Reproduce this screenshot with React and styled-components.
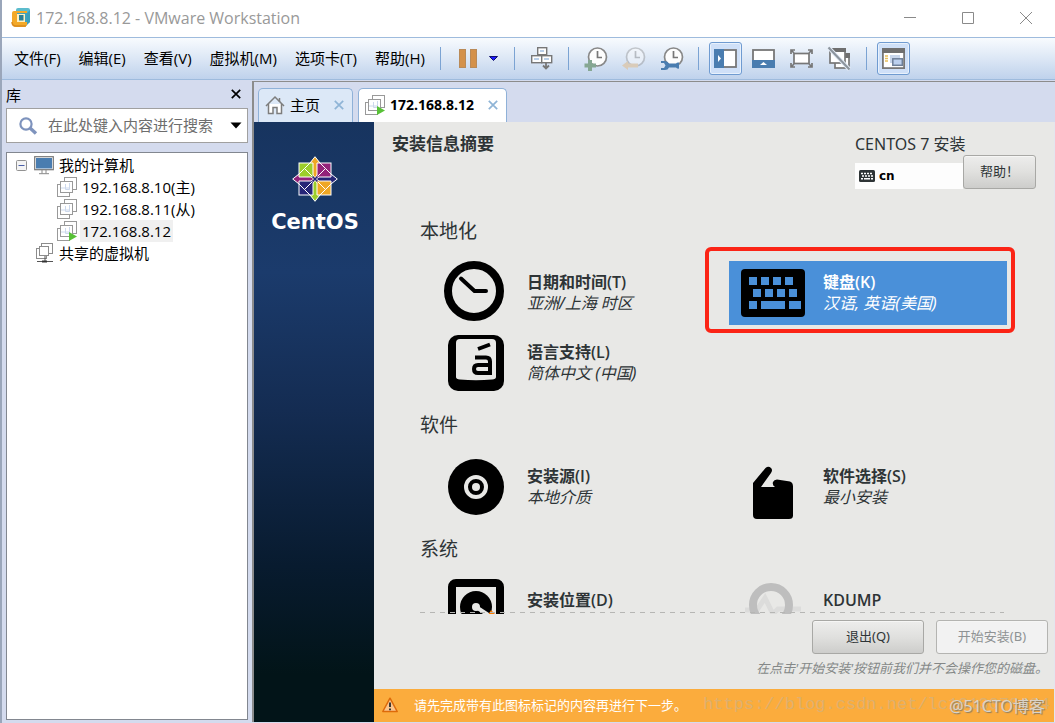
import React from 'react'
import styled, { createGlobalStyle, css } from 'styled-components'

const GlobalStyle = createGlobalStyle`
  * {
    box-sizing: border-box;
  }
  body {
    margin: 0;
    font-family: "Noto Sans", "Noto Sans CJK SC", sans-serif;
    background: #fff;
  }
  button {
    font: inherit;
    color: inherit;
    background: none;
    border: 0;
    padding: 0;
    margin: 0;
  }
  ul {
    list-style: none;
    margin: 0;
    padding: 0;
  }
  svg {
    display: block;
    flex: none;
    overflow: visible;
  }
`

/* ---------- icons ---------- */

const VmwareLogo = () => (
  <svg width="20" height="20" viewBox="0 0 20 20">
    <rect x="4" y="0" width="14" height="15" rx="2" fill="#5cbccd" />
    <path d="M18 2v12l-4 4H5V5h10z" fill="#3a9fbd" />
    <path d="M2 3q-2 0-2 2v10q0 4 4 4h9l2-2V3z" fill="#f3a928" />
    <path d="M0 14q0 4 4 4h10" fill="none" stroke="#d98a1c" strokeWidth="1.5" />
    <path d="M5 5h10v9h-3V8H5z" fill="#3fa3bf" />
    <rect x="5" y="6" width="8" height="8" fill="#fff0c0" />
    <rect x="7" y="7" width="4.500" height="5.500" fill="#2d7f95" />
  </svg>
)

const Pause = () => (
  <svg width="18" height="20" viewBox="0 0 18 20" fill="#d4914a" stroke="#b98a58">
    <rect x="0.5" y="0.5" width="6" height="18" />
    <rect x="11.5" y="0.5" width="6" height="18" />
  </svg>
)

const BlueArrow = () => (
  <svg width="10" height="6" viewBox="0 0 10 6">
    <path d="M0.5 0.5h8L4.500 4.500z" fill="#1c1cff" stroke="#10106a" />
  </svg>
)

const SendKeys = () => (
  <svg width="22" height="23" viewBox="0 0 22 23" stroke="#777" fill="#fdfdfd" strokeWidth="1.4">
    <rect x="6.7" y="0.7" width="9" height="7" />
    <rect x="0.7" y="8.7" width="10" height="7" />
    <rect x="10.7" y="8.7" width="10" height="7" />
    <path d="M9 4h4M3 12h5M13 12h5" stroke="#b9cfe9" strokeWidth="2" />
    <path d="M15 15v6M12 18.5l3 3 3-3" fill="none" strokeWidth="1.8" />
  </svg>
)

const Clock = ({ kind }) => (
  <svg width="24" height="24" viewBox="0 0 24 24">
    <g opacity={kind === 'revert' ? 0.4 : 1}>
      <circle cx="13.5" cy="10" r="9" fill="#fdfdfd" stroke="#888" strokeWidth="1.7" />
      <path d="M13.5 4v6.5H18" fill="none" stroke="#777" strokeWidth="1.7" />
    </g>
    {kind === 'take' && <path d="M4 13h4v3.500h4v4H8V24H4v-3.500H0.500v-4H4z" fill="#86a793" />}
    {kind === 'revert' && <path d="M0 18.500l6-4.500v2.500h10v4H6V23z" fill="#d9cbb9" />}
    {kind === 'manage' && (
      <path d="M1 14h4q3 0 4 2.500h7q1-1.500 3-1v6q-2 .5-3-1H9Q8 23 5 23H1v-2h3l1.500-2.500L4 16H1z" fill="#4a7db0" />
    )}
  </svg>
)

const LibraryPane = () => (
  <svg width="23" height="19" viewBox="0 0 23 19">
    <rect x="1" y="1" width="21" height="17" fill="#fff" stroke="#777" strokeWidth="1.8" />
    <rect width="10" height="19" fill="#4a7db0" />
    <path d="M4 6l3 3.500-3 3.500z" fill="#fff" />
  </svg>
)

const ThumbnailPane = () => (
  <svg width="23" height="19" viewBox="0 0 23 19">
    <rect x="1" y="1" width="21" height="17" fill="#fff" stroke="#777" strokeWidth="1.8" />
    <rect y="11" width="23" height="8" fill="#4a7db0" />
    <path d="M8 16l3.500-3 3.500 3z" fill="#fff" />
  </svg>
)

const FullScreen = () => (
  <svg width="23" height="19" viewBox="0 0 23 19" fill="none" stroke="#777" strokeWidth="1.7">
    <rect x="4" y="4.500" width="15" height="10" fill="#fff" />
    <path d="M1 5V1h4M18 1h4v4M22 14v4h-4M5 18H1v-4M1 1l3 3M22 1l-3 3M22 18l-3-3M1 18l3-3" />
  </svg>
)

const Unity = () => (
  <svg width="23" height="23" viewBox="0 0 23 23">
    <rect x="7" y="7" width="14" height="14" fill="#fff" stroke="#777" strokeWidth="1.7" />
    <rect x="6" y="6" width="16" height="5" fill="#6f6f6f" />
    <rect x="2" y="2" width="15" height="14" fill="#fff" stroke="#777" strokeWidth="1.7" />
    <rect x="1" y="1" width="17" height="4" fill="#6f6f6f" />
    <path d="M0.500 0.500l21 22" stroke="#e5edf8" strokeWidth="4" />
    <path d="M0.500 0.500l21 22" stroke="#8d959e" strokeWidth="2.200" />
  </svg>
)

const ConsoleView = () => (
  <svg width="23" height="21" viewBox="0 0 23 21">
    <rect x="0.900" y="0.900" width="21.200" height="19.200" fill="#fff" stroke="#777" strokeWidth="1.800" />
    <rect width="23" height="5" fill="#6f6f6f" />
    <path d="M3 8h3M3 10.500h3M3 13h3" stroke="#e8bf5a" strokeWidth="1.300" />
    <rect x="8" y="7" width="10" height="8" fill="#c8d6ec" />
    <rect x="10.800" y="10.800" width="9.500" height="6.500" fill="#bcd0ee" stroke="#6d7f98" strokeWidth="1.500" />
  </svg>
)

const WindowGlyph = ({ d }) => (
  <svg width="14" height="14" viewBox="0 0 14 14" fill="none" stroke="#8a8a8a">
    <path d={d} />
  </svg>
)

const Cross = ({ size = 10, color = '#000' }) => (
  <svg width={size} height={size} viewBox="0 0 10 10">
    <path d="M0.800 0.800l8.400 8.400M9.200 0.800L0.800 9.200" stroke={color} strokeWidth="1.700" />
  </svg>
)

const Magnifier = () => (
  <svg width="19" height="18" viewBox="0 0 19 18" fill="none" stroke="#7e93bd">
    <circle cx="7" cy="7" r="5.600" strokeWidth="2.200" />
    <path d="M11 11l6 5.500" strokeWidth="3.400" />
  </svg>
)

const Caret = () => (
  <svg width="12" height="7" viewBox="0 0 12 7">
    <path d="M0.500 0.500h11L6 6.500z" fill="#000" />
  </svg>
)

const Collapse = () => (
  <svg width="11" height="11" viewBox="0 0 11 11">
    <rect x="0.500" y="0.500" width="10" height="10" rx="1" fill="#f4f4f4" stroke="#929292" />
    <path d="M2.500 5.500h6" stroke="#4a5fa8" />
  </svg>
)

const Monitor = () => (
  <svg width="20" height="20" viewBox="0 0 20 20">
    <rect x="0.700" y="1.700" width="18.600" height="13" fill="#fff" stroke="#777" strokeWidth="1.200" />
    <rect x="2" y="3" width="16" height="10.500" fill="#4a7db0" />
    <path d="M8 15v3.500M12 15v3.500M5 18.700h10" stroke="#888" />
  </svg>
)

const VmIcon = ({ running }) => (
  <svg width="20" height="20" viewBox="0 0 20 20">
    <g fill="#fff" stroke="#999">
      <rect x="7.500" y="0.500" width="12" height="12" />
      <rect x="0.500" y="7.500" width="12" height="12" />
      <rect x="3.500" y="4.500" width="12" height="11" />
    </g>
    <path d="M4 11h9M8.500 7v5.500h4V6" fill="none" stroke="#ccd8ec" />
    {running && <path d="M12 11l8 4.500-8 4.500z" fill="#58c137" />}
  </svg>
)

const SharedIcon = () => (
  <svg width="18" height="20" viewBox="0 0 18 20">
    <g fill="#fff" stroke="#8c8c8c">
      <rect x="5.500" y="0.500" width="11" height="10" />
      <rect x="0.500" y="5.500" width="10" height="10" />
      <rect x="3.500" y="3.500" width="9" height="9" />
    </g>
    <path d="M9 13v5M1 18.500h16" stroke="#555" />
    <path d="M6 18.500h5" stroke="#333" strokeWidth="2" />
  </svg>
)

const House = () => (
  <svg width="20" height="20" viewBox="0 0 20 20" fill="#fff" stroke="#7d7d7d" strokeWidth="1.500">
    <path d="M3.500 9v9.500h4.500v-6h4v6h4.500V9" />
    <path d="M1 11L10 2l9 9" fill="none" />
    <path d="M14.500 3v4" />
  </svg>
)

const CentosMark = () => (
  <svg width="46" height="46" viewBox="0 0 46 46" stroke="#fff" strokeWidth="1">
    <rect x="7" y="7" width="15" height="15" fill="#9ccd2a" />
    <rect x="24" y="7" width="15" height="15" fill="#932279" />
    <rect x="24" y="24" width="15" height="15" fill="#efa724" />
    <rect x="7" y="24" width="15" height="15" fill="#262577" />
    <path d="M23 2l10.500 10.500L23 23 12.500 12.500z" fill="#9ccd2a" />
    <path d="M23 2l10.500 10.500L23 23z" fill="#932279" />
    <path d="M44 23L33.500 33.500 23 23l10.500-10.500z" fill="#932279" />
    <path d="M44 23L33.500 33.500 23 23z" fill="#efa724" />
    <path d="M23 44L12.500 33.500 23 23l10.500 10.500z" fill="#efa724" />
    <path d="M23 44L12.500 33.500 23 23z" fill="#262577" />
    <path d="M2 23l10.500-10.500L23 23 12.500 33.500z" fill="#262577" />
    <path d="M2 23l10.500-10.500L23 23z" fill="#9ccd2a" />
    <path d="M23 0.700l5 6.300h-3v12l-2 3-2-3V7h-3z" fill="#efa724" />
    <path d="M45.300 23L39 28v-3H27l-3-2 3-2h12v-3z" fill="#262577" />
    <path d="M23 45.300L18 39h3V27l2-3 2 3v12h3z" fill="#9ccd2a" />
    <path d="M0.700 23L7 18v3h12l3 2-3 2H7v3z" fill="#932279" />
    <path d="M20.500 20.500l5 5M25.500 20.500l-5 5" stroke="#262577" strokeWidth="1.500" />
  </svg>
)

const SmallKeyboard = () => (
  <svg width="16" height="12" viewBox="0 0 16 12">
    <rect width="16" height="12" rx="1.500" fill="#2e3436" />
    <path d="M2 3.500h2M5 3.500h2M8 3.500h2M11 3.500h2M3 6h2M6 6h2M9 6h2M12 6h2M2 8.800h2M5 8.800h6M12 8.800h2" stroke="#fff" strokeWidth="1.500" />
  </svg>
)

const DateTime = () => (
  <svg width="64" height="64" viewBox="0 0 64 64" fill="none" stroke="#000">
    <circle cx="29" cy="30" r="26" strokeWidth="8" />
    <path d="M16 17.500L29.500 30H41" strokeWidth="4" strokeLinecap="round" strokeLinejoin="round" />
  </svg>
)

const KeyboardIcon = () => (
  <svg width="64" height="64" viewBox="0 0 64 64">
    <rect y="8" width="64" height="48" rx="4" fill="#000" />
    <g fill="#4a90d9">
      {[8, 20, 32, 44].map((x) => <rect key={x} x={x} y="16" width="8" height="8" />)}
      {[12, 24, 36, 48].map((x) => <rect key={x} x={x} y="28" width="8" height="8" />)}
      <rect x="8" y="40" width="8" height="8" />
      <rect x="20" y="40" width="24" height="8" />
      <rect x="48" y="40" width="12" height="8" />
    </g>
  </svg>
)

const Language = () => (
  <svg width="64" height="64" viewBox="0 0 64 64">
    <rect x="3" y="4" width="56" height="56" rx="10" fill="#000" />
    <path d="M15 8h32q4 0 4 4v34q0 2-4 2.500-16 1.500-32 0-4-.5-4-2.500V12q0-4 4-4z" fill="#e8e8e6" />
    <path d="M30 26.500h11q4 0 4 4V42H33q-4 0-4-4t4-4h12" fill="none" stroke="#000" strokeWidth="4" />
    <path d="M33 18l12-4.500" stroke="#000" strokeWidth="4" />
  </svg>
)

const Disc = () => (
  <svg width="64" height="64" viewBox="0 0 64 64">
    <circle cx="31" cy="32" r="28" fill="#000" />
    <circle cx="31" cy="32" r="10" fill="none" stroke="#e8e8e6" strokeWidth="4" />
    <circle cx="31" cy="32" r="4" fill="#e8e8e6" />
  </svg>
)

const Package = () => (
  <svg width="64" height="64" viewBox="0 0 64 64">
    <path d="M12 28L24.500 13q3-2.500 5.500 0 2 2 0 5L20 32h14q-3-2-2-5 1-2.500 4-2.500l13 2q3 1 3 5v29q0 3.500-4 3.500H16q-4 0-4-4z" fill="#000" />
  </svg>
)

const HardDrive = () => (
  <svg width="64" height="64" viewBox="0 0 64 64">
    <rect x="7" y="4" width="48" height="60" rx="4" fill="none" stroke="#000" strokeWidth="8" />
    <circle cx="31" cy="28" r="16" fill="#000" />
    <circle cx="31" cy="28" r="4" fill="#e8e8e6" />
    <path d="M31 28l17 11" stroke="#e8e8e6" strokeWidth="4" />
    <path d="M43 36l3-5 6 6z" fill="#f57900" />
  </svg>
)

const Kdump = () => (
  <svg width="64" height="64" viewBox="0 0 64 64" fill="none">
    <path d="M4 31h12l8-12 8 16 5-5h23" stroke="#dcdcdb" strokeWidth="5" />
    <circle cx="30" cy="26" r="18" stroke="#bebebe" strokeWidth="8" />
  </svg>
)

const Warning = () => (
  <svg width="16" height="16" viewBox="0 0 16 16">
    <path d="M8 1.200L15.200 14.500H0.800z" fill="#fbc58c" stroke="#dd6a09" strokeWidth="1.500" strokeLinejoin="round" />
    <path d="M8 5.500v4.500M8 11.500v1.700" stroke="#333" strokeWidth="1.900" />
  </svg>
)

/* ---------- page ---------- */

const menus = ['文件(F)', '编辑(E)', '查看(V)', '虚拟机(M)', '选项卡(T)', '帮助(H)']

const sections = [
  {
    title: '本地化',
    items: [
      { name: '日期和时间(T)', status: '亚洲/上海 时区', icon: <DateTime /> },
      { name: '键盘(K)', status: '汉语, 英语(美国)', icon: <KeyboardIcon />, selected: true },
      { name: '语言支持(L)', status: '简体中文 (中国)', icon: <Language /> },
    ],
  },
  {
    title: '软件',
    items: [
      { name: '安装源(I)', status: '本地介质', icon: <Disc /> },
      { name: '软件选择(S)', status: '最小安装', icon: <Package /> },
    ],
  },
  {
    title: '系统',
    items: [
      { name: '安装位置(D)', icon: <HardDrive /> },
      { name: 'KDUMP', icon: <Kdump /> },
    ],
  },
]

export default function App() {
  return (
    <>
      <GlobalStyle />
      <Window>
        <TitleBar>
          <VmwareLogo />
          <WindowTitle>172.168.8.12 - VMware Workstation</WindowTitle>
          <WindowButton aria-label="最小化"><WindowGlyph d="M1 6.5h12" /></WindowButton>
          <WindowButton aria-label="最大化"><WindowGlyph d="M1.500 1.500h11v11h-11z" /></WindowButton>
          <WindowButton aria-label="关闭"><WindowGlyph d="M1 1l12 12M13 1L1 13" /></WindowButton>
        </TitleBar>
        <MenuBar>
          <Menus>
            {menus.map((menu) => <MenuButton key={menu}>{menu}</MenuButton>)}
          </Menus>
          <Separator />
          <Tool aria-label="挂起"><Pause /></Tool>
          <Tool $narrow aria-label="电源选项"><BlueArrow /></Tool>
          <Separator />
          <Tool aria-label="发送 Ctrl+Alt+Del"><SendKeys /></Tool>
          <Separator />
          <ToolGroup>
            <Tool aria-label="拍摄快照"><Clock kind="take" /></Tool>
            <Tool aria-label="恢复快照"><Clock kind="revert" /></Tool>
            <Tool aria-label="管理快照"><Clock kind="manage" /></Tool>
          </ToolGroup>
          <Separator />
          <ToolGroup>
            <Tool $pressed aria-label="显示库"><LibraryPane /></Tool>
            <Tool aria-label="显示缩略图"><ThumbnailPane /></Tool>
            <Tool aria-label="全屏"><FullScreen /></Tool>
            <Tool aria-label="Unity"><Unity /></Tool>
          </ToolGroup>
          <Separator />
          <Tool $pressed aria-label="控制台视图"><ConsoleView /></Tool>
        </MenuBar>

        <Body>
          <Library>
            <LibraryHead>
              库
              <button aria-label="关闭库"><Cross /></button>
            </LibraryHead>
            <Search>
              <Magnifier />
              <SearchInput aria-label="搜索" placeholder="在此处键入内容进行搜索" />
              <Caret />
            </Search>
            <Tree>
              <TreeRow $indent="9px"><Collapse /><TreeIcon><Monitor /></TreeIcon><TreeLabel>我的计算机</TreeLabel></TreeRow>
              <TreeRow $indent="50px"><VmIcon /><TreeLabel>192.168.8.10(主)</TreeLabel></TreeRow>
              <TreeRow $indent="50px"><VmIcon /><TreeLabel>192.168.8.11(从)</TreeLabel></TreeRow>
              <TreeRow $indent="50px"><VmIcon running /><TreeLabel $selected>172.168.8.12</TreeLabel></TreeRow>
              <TreeRow $indent="29px"><SharedIcon /><TreeLabel>共享的虚拟机</TreeLabel></TreeRow>
            </Tree>
          </Library>

          <Workspace>
            <Tabs>
              <Tab><House /><TabName>主页</TabName><Cross color="#8fb4d6" /></Tab>
              <Tab $active><VmIcon running /><TabName>172.168.8.12</TabName><Cross color="#8fb4d6" /></Tab>
            </Tabs>
            <Guest>
              <Brand>
                <CentosMark />
                <BrandName>CentOS</BrandName>
              </Brand>
              <Installer>
                <Header>
                  <Title>安装信息摘要</Title>
                  <div>
                    <Product>CENTOS 7 安装</Product>
                    <HeaderRow>
                      <Layout><SmallKeyboard />cn</Layout>
                      <HelpButton>帮助！</HelpButton>
                    </HeaderRow>
                  </div>
                </Header>
                <Hub>
                  {sections.map((section) => (
                    <section key={section.title}>
                      <SectionTitle>{section.title}</SectionTitle>
                      <Spokes>
                        {section.items.map((item) => (
                          <Spoke key={item.name} $selected={item.selected}>
                            {item.icon}
                            <span>
                              <SpokeName>{item.name}</SpokeName>
                              {item.status && <SpokeStatus>{item.status}</SpokeStatus>}
                            </span>
                            {item.selected && <Highlight />}
                          </Spoke>
                        ))}
                      </Spokes>
                    </section>
                  ))}
                  <ScrollEdge />
                </Hub>
                <Footer>
                  <Actions>
                    <ActionButton>退出(Q)</ActionButton>
                    <ActionButton disabled>开始安装(B)</ActionButton>
                  </Actions>
                  <Hint>在点击'开始安装'按钮前我们并不会操作您的磁盘。</Hint>
                </Footer>
                <WarningBar>
                  <Warning />
                  <span>请先完成带有此图标标记的内容再进行下一步。</span>
                  <BlogUrl>https://blog.csdn.net/lc1013078424</BlogUrl>
                  <Stamp>@51CTO博客</Stamp>
                </WarningBar>
              </Installer>
            </Guest>
          </Workspace>
        </Body>
      </Window>
    </>
  )
}

const Window = styled.div`
  height: 100vh;
  display: flex;
  flex-direction: column;
  border-left: 2px solid #9aa6ba;
  overflow: hidden;
`

const TitleBar = styled.header`
  height: 37px;
  flex: none;
  display: flex;
  align-items: center;
  padding: 0 0 1px 10px;
  background: #fff;
`

const WindowTitle = styled.span`
  flex: 1;
  margin-left: 4px;
  font-family: "Open Sans", sans-serif;
  font-size: 16px;
  color: #999;
`

const WindowButton = styled.button`
  width: 58px;
  height: 36px;
  display: flex;
  align-items: center;
  justify-content: center;
`

const MenuBar = styled.nav`
  height: 43px;
  flex: none;
  display: flex;
  align-items: center;
  border-top: 1px solid #9ebbdd;
  border-bottom: 1px solid #9ebbdd;
  background: linear-gradient(#f8fbfe, #dfe9f6 45%, #bfd2ec);
`

const Menus = styled.div`
  display: flex;
  gap: 18px;
  width: 438px;
  padding-left: 12px;
`

const MenuButton = styled.button`
  padding-bottom: 2px;
  font-family: "Open Sans", "Noto Sans CJK SC", sans-serif;
  font-size: 15px;
  color: #000;
  white-space: nowrap;
`

const Separator = styled.div`
  width: 1px;
  height: 23px;
  margin-right: 10px;
  background: #7ba3d3;
  * + & {
    margin-left: 10px;
  }
  ${Menus} + & {
    margin-left: 0;
  }
`

const ToolGroup = styled.div`
  display: flex;
  gap: 5px;
`

const Tool = styled.button`
  width: ${(p) => (p.$narrow ? '20px' : '33px')};
  height: 33px;
  display: flex;
  align-items: center;
  justify-content: center;
  border-radius: 3px;
  ${(p) => p.$pressed && css`
    border: 1px solid #6f9bd1;
    background: #cfe0f8;
    box-shadow: inset 0 0 0 1px #e8f1fc;
  `}
`

const Body = styled.div`
  flex: 1;
  min-height: 0;
  display: flex;
  padding-bottom: 1px;
  background: #d4dbee;
`

const Library = styled.aside`
  width: 250px;
  flex: none;
  display: flex;
  flex-direction: column;
  padding: 0 4px 2px;
  font-family: "Open Sans", "Noto Sans CJK SC", sans-serif;
  font-size: 15px;
  color: #000;
`

const LibraryHead = styled.div`
  height: 28px;
  display: flex;
  align-items: center;
  justify-content: space-between;
  padding-right: 7px;
`

const Search = styled.div`
  height: 35px;
  display: flex;
  align-items: center;
  padding: 0 5px 0 12px;
  margin-bottom: 9px;
  border: 1px solid #a0a0a0;
  background: #fff;
`

const SearchInput = styled.input`
  flex: 1;
  min-width: 0;
  border: 0;
  padding: 0 0 2px;
  margin-left: 10px;
  font: inherit;
  outline: none;
  background: none;
  &::placeholder {
    color: #6d6d6d;
  }
`

const Tree = styled.ul`
  flex: 1;
  padding-top: 1px;
  border: 1px solid #828790;
  background: #fff;
`

const TreeRow = styled.li`
  height: 22px;
  display: flex;
  align-items: center;
  padding-left: ${(p) => p.$indent};
`

const TreeIcon = styled.span`
  margin-left: 7px;
`

const TreeLabel = styled.span`
  line-height: 22px;
  margin-left: 3px;
  padding: 0 2px;
  background: ${(p) => (p.$selected ? '#f0f0f0' : 'none')};
`

const Workspace = styled.main`
  flex: 1;
  min-width: 0;
  display: flex;
  flex-direction: column;
  margin-top: 1px;
  border-top: 1px solid #8c8c8c;
  border-left: 2px solid #8c8c8c;
`

const Tabs = styled.div`
  height: 40px;
  flex: none;
  display: flex;
  align-items: flex-end;
  gap: 5px;
  padding-left: 4px;
`

const Tab = styled.button`
  height: 34px;
  display: flex;
  align-items: center;
  padding: 0 8px 2px 6px;
  border: 1px solid #8fb1d8;
  border-bottom: 0;
  border-radius: 5px 5px 0 0;
  font-family: "Open Sans", "Noto Sans CJK SC", sans-serif;
  font-size: ${(p) => (p.$active ? '14px' : '15px')};
  font-weight: ${(p) => (p.$active ? 700 : 400)};
  color: #000;
  background: ${(p) => (p.$active ? '#fff' : '#dce8f7')};
`

const TabName = styled.span`
  margin: 0 14px 0 5px;
`

const Guest = styled.div`
  flex: 1;
  min-height: 0;
  display: flex;
  border-right: 1px solid #e3e6ee;
`

const Brand = styled.div`
  width: 120px;
  flex: none;
  display: flex;
  flex-direction: column;
  align-items: center;
  padding: 34px 0 0 2px;
  background: linear-gradient(#17345f, #1b3b6c 25%, #142c52 48%, #081b2f 74%, #021418 92%);
`

const BrandName = styled.div`
  margin-top: 5px;
  line-height: 30px;
  font-family: "DejaVu Sans", sans-serif;
  font-size: 21px;
  font-weight: 700;
  color: #fff;
`

const Installer = styled.div`
  flex: 1;
  min-width: 0;
  display: flex;
  flex-direction: column;
  color: #2e3436;
  background: #e8e8e6;
`

const Header = styled.div`
  display: flex;
  justify-content: space-between;
  padding: 12px 18px 0;
`

const Title = styled.h1`
  margin: 0;
  font-size: 17px;
  line-height: 20px;
  font-weight: 700;
`

const Product = styled.div`
  font-size: 16px;
  line-height: 21px;
`

const HeaderRow = styled.div`
  display: flex;
  align-items: flex-end;
`

const Layout = styled.div`
  width: 108px;
  height: 26px;
  display: flex;
  align-items: center;
  gap: 4px;
  padding-left: 4px;
  font-family: "DejaVu Sans", sans-serif;
  font-size: 12px;
  font-weight: 700;
  color: #000;
  background: #fdfdfd;
`

const ActionButton = styled.button`
  width: 112px;
  height: 34px;
  padding-bottom: 3px;
  border: 1px solid #a8a8a5;
  border-radius: 3px;
  font-size: 13px;
  color: #2e3436;
  background: linear-gradient(#ededec, #e0e0de 50%, #cdcdcb);
  box-shadow: inset 0 1px 0 #f6f6f5;
  &:disabled {
    color: #8f9394;
    border-color: #b4b4b1;
    background: #f2f2f2;
  }
`

const HelpButton = styled(ActionButton)`
  width: 73px;
`

const Hub = styled.div`
  flex: 1;
  min-height: 0;
  overflow: hidden;
  position: relative;
  padding: 30px 47px 0 46px;
`

const SectionTitle = styled.h2`
  margin: 0 0 18px;
  font-size: 19px;
  line-height: 24px;
  font-weight: 400;
`

const Spokes = styled.div`
  display: grid;
  grid-template-columns: 1fr 1fr;
  gap: 6px 18px;
  padding-left: 13px;
  margin-bottom: 18px;
`

const Spoke = styled.button`
  position: relative;
  height: 64px;
  display: flex;
  gap: 18px;
  padding-left: 12px;
  text-align: left;
  color: ${(p) => (p.$selected ? '#fff' : '#2e3436')};
  background: ${(p) => (p.$selected ? '#4a90d9' : 'none')};
`

const SpokeName = styled.strong`
  display: block;
  padding-top: 11px;
  font-family: "Open Sans", "Noto Sans CJK SC", sans-serif;
  font-size: 16px;
  line-height: 21px;
  font-weight: 600;
`

const SpokeStatus = styled.em`
  display: block;
  font-size: 16px;
  line-height: 21px;
`

/* frame round the chosen spoke */
const Highlight = styled.span`
  position: absolute;
  top: -14px;
  left: -24px;
  right: -8px;
  bottom: -8px;
  border: 4px solid #fb2416;
  border-radius: 6px;
`

const ScrollEdge = styled.div`
  position: absolute;
  left: 46px;
  right: 50px;
  bottom: 1px;
  height: 1px;
  background: repeating-linear-gradient(90deg, #b6b6b4 0 5px, transparent 5px 10px);
`

const Footer = styled.footer`
  display: flex;
  flex-direction: column;
  align-items: flex-end;
  gap: 4px;
  padding: 6px 6px 11px;
`

const Actions = styled.div`
  display: flex;
  gap: 12px;
`

const Hint = styled.em`
  font-size: 13px;
  line-height: 20px;
  color: #858888;
`

const WarningBar = styled.div`
  position: relative;
  height: 33px;
  flex: none;
  display: flex;
  align-items: center;
  gap: 16px;
  padding: 0 0 2px 8px;
  font-size: 13px;
  white-space: nowrap;
  color: #fff;
  background: #fbac3d;
`

const BlogUrl = styled.span`
  position: absolute;
  right: 4px;
  font-family: "Liberation Mono", monospace;
  font-size: 17px;
  color: rgba(190, 180, 160, 0.5);
`

const Stamp = styled.span`
  position: absolute;
  right: 9px;
  font-size: 16px;
  color: #d9d3c8;
  text-shadow: 1px 1px 1px #8a7a60;
`
